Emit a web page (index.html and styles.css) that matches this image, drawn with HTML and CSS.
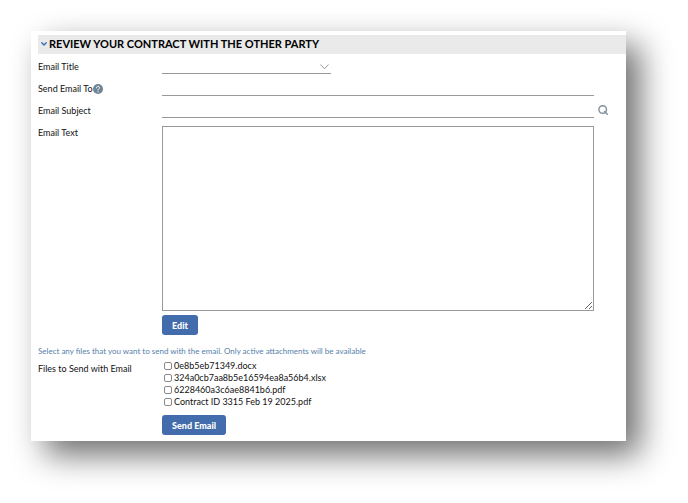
FILE: index.html
```html
<!DOCTYPE html>
<html lang="en">
<head>
    <meta charset="UTF-8">
    <meta name="viewport" content="width=device-width, initial-scale=1.0">
    <title>Review Your Contract</title>
    <link rel="stylesheet" href="styles.css">
</head>
<body>

<form class="panel">
    <h1 class="panel-title">
        <svg class="toggle" viewBox="0 0 6 4"><path d="M.8 .8 3 3 5.2 .8"/></svg>
        Review your contract with the other party
    </h1>

    <div class="row">
        <label for="emailTitle">Email Title</label>
        <div class="field">
            <select id="emailTitle" class="line short"><option></option></select>
            <svg class="arrow" viewBox="0 0 9 6"><path d="M.7 .8 4.5 4.8 8.3 .8"/></svg>
        </div>
    </div>

    <div class="row">
        <label for="sendTo">Send Email To<svg class="help" viewBox="0 0 10 10"><circle cx="5" cy="5" r="5"/><path d="M3.4 3.9C3.4 1.8 6.6 1.8 6.6 3.8 6.6 4.9 5 4.9 5 6M5 7.6V8"/></svg></label>
        <div class="field">
            <input id="sendTo" class="line" type="text">
        </div>
    </div>

    <div class="row">
        <label for="emailSubject">Email Subject</label>
        <div class="field">
            <input id="emailSubject" class="line" type="text">
        </div>
        <button class="search" type="button" aria-label="Search">
            <svg viewBox="0 0 10 10"><circle cx="4.7" cy="4.5" r="3.8"/><path d="M6.6 6.6 9.3 9.3"/></svg>
        </button>
    </div>

    <div class="row">
        <label for="emailText">Email Text</label>
        <div class="field">
            <textarea id="emailText"></textarea>
            <button class="btn" type="button">Edit</button>
        </div>
    </div>

    <p class="note">Select any files that you want to send with the email. Only active attachments will be available</p>

    <div class="row files">
        <span class="caption" id="filesLabel">Files to Send with Email</span>
        <div class="field" role="group" aria-labelledby="filesLabel">
            <label class="file"><input type="checkbox">0e8b5eb71349.docx</label>
            <label class="file"><input type="checkbox">324a0cb7aa8b5e16594ea8a56b4.xlsx</label>
            <label class="file"><input type="checkbox">6228460a3c6ae8841b6.pdf</label>
            <label class="file"><input type="checkbox">Contract ID 3315 Feb 19 2025.pdf</label>
            <button class="btn" type="submit">Send Email</button>
        </div>
    </div>
</form>

</body>
</html>
```

FILE: styles.css
```css
* {
    box-sizing: border-box;
}

body {
    margin: 0;
    padding: 31px 62px 62px 31px;
    color: #111;
    font-family: Lato, sans-serif;
    font-size: 9px;
    line-height: 12px;
}

.panel {
    position: relative;
    z-index: 0;
    padding: 4px 0 6px 7px;
}

/* soft drop shadow, then the white sheet over it */
.panel::before,
.panel::after {
    content: "";
    position: absolute;
    inset: 0;
    z-index: -1;
    background-color: #fff;
}

.panel::before {
    inset: 14px -14px -14px 14px;
    z-index: -2;
    background-color: rgba(0, 0, 0, 0.57);
    filter: blur(16px);
}

.panel-title {
    display: flex;
    align-items: center;
    gap: 2px;
    height: 19px;
    margin: 0 0 4px;
    padding: 0 0 1px 3px;
    background-color: #eaeaea;
    color: #000;
    font-size: 11px;
    font-weight: 700;
    text-transform: uppercase;
}

svg {
    fill: none;
    stroke-linecap: round;
    stroke-linejoin: round;
}

.toggle {
    width: 6px;
    height: 4px;
    stroke: #2f66b5;
    stroke-width: 1.3;
}

.row {
    display: grid;
    grid-template-columns: 124px 1fr 32px;
    margin-bottom: 6px;
}

.row > label,
.caption {
    padding-top: 3px;
}

.field {
    position: relative;
}

.line {
    display: block;
    width: 100%;
    height: 16px;
    padding: 0 2px;
    border: 0;
    border-bottom: 1px solid #999;
    border-radius: 0;
    background: none;
    font: inherit;
    outline: none;
}

.short {
    width: 169px;
    appearance: none;
}

.arrow {
    position: absolute;
    top: 6px;
    left: 158px;
    width: 9px;
    height: 6px;
    stroke: #999;
    pointer-events: none;
}

.help {
    width: 10px;
    height: 10px;
    vertical-align: -2px;
    stroke: #fff;
}

.help circle {
    fill: #6f8494;
    stroke: none;
}

.search {
    width: 10px;
    height: 10px;
    margin: 3px 0 0 4px;
    padding: 0;
    border: 0;
    background: none;
    cursor: pointer;
}

.search svg {
    display: block;
    stroke: #7d909d;
    stroke-width: 1.4;
}

textarea {
    display: block;
    width: 100%;
    height: 185px;
    margin: 2px 0 4px;
    border: 1px solid #999;
    font: inherit;
    outline: none;
}

.btn {
    display: block;
    height: 20px;
    padding: 0 10px;
    border: 0;
    border-radius: 3px;
    background-color: #426cab;
    color: #fff;
    font-family: inherit;
    font-size: 9px;
    font-weight: 900;
    cursor: pointer;
}

.note {
    margin: 10px 0 3px;
    color: #5580ab;
    font-size: 8px;
}

.files {
    margin-bottom: 0;
}

.file {
    display: flex;
    align-items: center;
    gap: 2px;
}

.file input {
    width: 8px;
    height: 8px;
    margin: 0 0 0 2px;
    appearance: none;
    border: 1px solid #888;
    border-radius: 2px;
}

.file input:checked {
    background-color: #426cab;
}

.files .btn {
    margin-top: 7px;
}
```
